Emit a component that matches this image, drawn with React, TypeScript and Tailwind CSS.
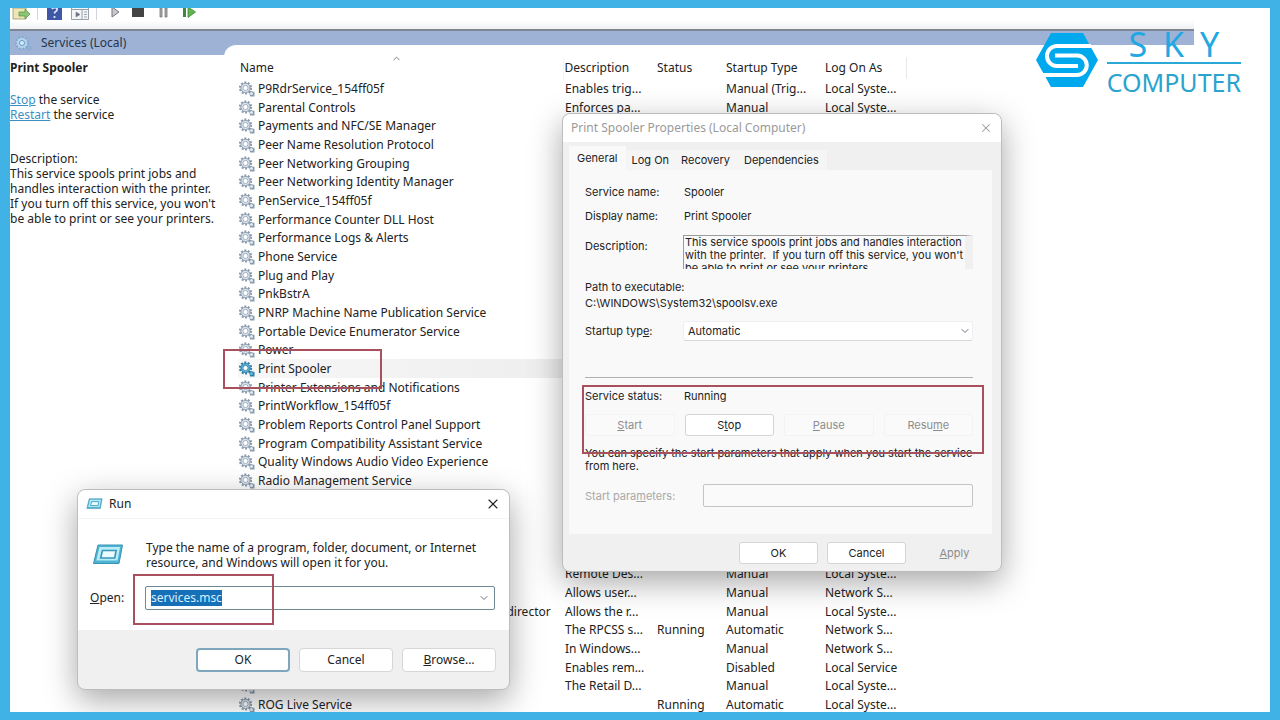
import { ChevronDown, ChevronUp, X } from "lucide-react";
import { useState } from "react";

type Service = {
    name: string
    description?: string
    status?: string
    startup?: string
    logOn?: string
}

const services: Service[] = [
    { name: 'P9RdrService_154ff05f', description: 'Enables trig...', startup: 'Manual (Trig...', logOn: 'Local Syste...' },
    { name: 'Parental Controls', description: 'Enforces pa...', startup: 'Manual', logOn: 'Local Syste...' },
    { name: 'Payments and NFC/SE Manager' },
    { name: 'Peer Name Resolution Protocol' },
    { name: 'Peer Networking Grouping' },
    { name: 'Peer Networking Identity Manager' },
    { name: 'PenService_154ff05f' },
    { name: 'Performance Counter DLL Host' },
    { name: 'Performance Logs & Alerts' },
    { name: 'Phone Service' },
    { name: 'Plug and Play' },
    { name: 'PnkBstrA' },
    { name: 'PNRP Machine Name Publication Service' },
    { name: 'Portable Device Enumerator Service' },
    { name: 'Power' },
    { name: 'Print Spooler' },
    { name: 'Printer Extensions and Notifications' },
    { name: 'PrintWorkflow_154ff05f' },
    { name: 'Problem Reports Control Panel Support' },
    { name: 'Program Compatibility Assistant Service' },
    { name: 'Quality Windows Audio Video Experience' },
    { name: 'Radio Management Service' },
    { name: '' },
    { name: '' },
    { name: '' },
    { name: '' },
    { name: '', description: 'Remote Des...', startup: 'Manual', logOn: 'Local Syste...' },
    { name: '', description: 'Allows user...', startup: 'Manual', logOn: 'Network S...' },
    { name: 'Remote Desktop Services UserMode Port Redirector', description: 'Allows the r...', startup: 'Manual', logOn: 'Local Syste...' },
    { name: '', description: 'The RPCSS s...', status: 'Running', startup: 'Automatic', logOn: 'Network S...' },
    { name: '', description: 'In Windows...', startup: 'Manual', logOn: 'Network S...' },
    { name: '', description: 'Enables rem...', startup: 'Disabled', logOn: 'Local Service' },
    { name: 'Retail Demo Service', description: 'The Retail D...', startup: 'Manual', logOn: 'Local Syste...' },
    { name: 'ROG Live Service', status: 'Running', startup: 'Automatic', logOn: 'Local Syste...' },
]

const spoolerDescription = `This service spools print jobs and handles interaction
with the printer.  If you turn off this service, you won't
be able to print or see your printers.`

function GearIcon({ active }: { active?: boolean }) {
    const line = active ? '#2f7fa8' : '#8b9bad'
    const fill = active ? '#5fb4d6' : '#dde8f1'
    return (
        <svg className="w-[18px] h-4 shrink-0" viewBox="0 0 18 16" fill="none">
            <circle cx="7.5" cy="7" r="5.6" stroke={line} strokeWidth="2" strokeDasharray="2 1.5" />
            <circle cx="7.5" cy="7" r="4.6" fill={fill} stroke={line} strokeWidth="1" />
            <circle cx="7.5" cy="7" r="2.6" fill="#fff" stroke={line} strokeWidth="0.8" />
            <path d="M11 9.500l5.500 1.500v4.500h-4.500z" fill={line} />
            <circle cx="13.5" cy="12.5" r="1.5" fill={fill} />
        </svg>
    )
}

function RunIcon({ className }: { className: string }) {
    return (
        <svg className={className} viewBox="0 0 32 22">
            <path d="M6 1h24.5l-3.5 18.5H1.5z" fill="#4fb3d3" stroke="#3a93b4" strokeWidth="1" />
            <path d="M7.5 3h20.6l-2.6 13.5H4.3z" fill="#b9ecf6" />
            <path d="M10.5 6.5h13.6l-1.4 7.5H8.6z" fill="#e9fbfe" stroke="#3796ba" strokeWidth="1.6" />
        </svg>
    )
}

function Toolbar() {
    return (
        <div className="h-[21px] shrink-0 flex items-start pl-0.5 bg-linear-to-b from-white from-60% to-[#eef0f3]">
            <svg className="w-[19px] h-3" viewBox="0 0 19 12">
                <path d="M1 0h13v11H1z" fill="#ece5b4" stroke="#a9a77c" />
                <path d="M7 4h6V1l5 5-5 5V8H7z" fill="#8cc474" stroke="#5f9a52" strokeWidth="0.8" />
            </svg>
            <div className="w-px h-3 bg-gray-300 ml-1.5"></div>
            <svg className="w-[15px] h-3 ml-[9px]" viewBox="0 0 15 12">
                <path d="M0 0h15v12H0z" fill="#3f57a5" />
                <path d="M5 1c1-2 6-2 5 1-.5 1.500-2.500 1.500-2.500 3.500M7.500 8v2" stroke="#dbe6ff" strokeWidth="1.8" fill="none" />
            </svg>
            <svg className="w-[18px] h-3 ml-[9px]" viewBox="0 0 18 12">
                <path d="M.5 0v11.500h17V0" fill="#f3f5f7" stroke="#98a0aa" />
                <path d="M0 1.500h18M11 1.500v10" stroke="#98a0aa" />
                <path d="M5 4l4 2.500L5 9zM13 4h3M13 6.500h3M13 9h3" fill="#667" stroke="#8a93a0" strokeWidth="0.8" />
            </svg>
            <div className="w-px h-3 bg-gray-300 ml-[7px]"></div>
            <svg className="w-[9px] h-2.5 ml-3.5" viewBox="0 0 9 10">
                <path d="M1-1v10l7-5z" fill="#c9c9cd" stroke="#77777d" />
            </svg>
            <svg className="w-3 h-2.5 ml-3" viewBox="0 0 12 10">
                <path d="M0 0h12v9H0z" fill="#444" />
            </svg>
            <svg className="w-[9px] h-2.5 ml-[15px]" viewBox="0 0 9 10">
                <path d="M1 0h2v9H1zM6 0h2v9H6z" fill="#aaa" stroke="#777" strokeWidth="0.8" />
            </svg>
            <svg className="w-[13px] h-2.5 ml-[15px]" viewBox="0 0 13 10">
                <path d="M0 0h3v9H0z" fill="#3d8a3d" />
                <path d="M5-1v10.500l7.500-5.500z" fill="#62b34c" stroke="#3d8a3d" strokeWidth="0.8" />
            </svg>
        </div>
    )
}

function DetailsPane() {
    return (
        <div className="w-[214px] shrink-0 flex flex-col">
            <div className="h-6 shrink-0 flex items-center gap-[9px] pl-1 text-[#26354e]">
                <svg className="w-[18px] h-4" viewBox="0 0 18 16" fill="none">
                    <circle cx="8" cy="8" r="6" fill="#b8d3ec" stroke="#7fa9cf" strokeWidth="2" strokeDasharray="2 1.400" />
                    <circle cx="8" cy="8" r="2.500" fill="#dcecf9" stroke="#5f9ac6" />
                    <circle cx="15" cy="13" r="2" stroke="#7fa9cf" />
                </svg>
                <span>Services (Local)</span>
            </div>
            <div className="flex-1 bg-white leading-[15px] whitespace-nowrap">
                <h2 className="font-bold mt-[5px]">Print Spooler</h2>
                <div className="mt-[17px]"><a href="#stop" className="text-[#3c8fc4] underline">Stop</a> the service</div>
                <div><a href="#restart" className="text-[#3c8fc4] underline">Restart</a> the service</div>
                <div className="mt-[29px]">Description:</div>
                <p>
                    This service spools print jobs and<br />
                    handles interaction with the printer.<br />
                    If you turn off this service, you won't<br />
                    be able to print or see your printers.
                </p>
            </div>
        </div>
    )
}

function ServiceList() {
    return (
        <div className="relative flex-1 min-w-0 mt-3.5 bg-white rounded-tl-xl overflow-hidden">
            <ChevronUp className="absolute left-[167px] top-2 w-[11px] h-[11px] text-gray-500" strokeWidth={2} />
            <table className="table-fixed w-[668px] ml-3.5 mt-3 text-left whitespace-nowrap">
                <colgroup>
                    <col className="w-[325px]" />
                    <col className="w-[92px]" />
                    <col className="w-[69px]" />
                    <col className="w-[99px]" />
                    <col className="w-[83px]" />
                </colgroup>
                <thead>
                    <tr className="h-[22px]">
                        <th className="font-normal p-0 pl-0.5">Name</th>
                        <th className="font-normal p-0 pl-px border-l border-gray-100">Description</th>
                        <th className="font-normal p-0 pl-0.5">Status</th>
                        <th className="font-normal p-0 pl-0.5">Startup Type</th>
                        <th className="font-normal p-0 pl-0.5 border-r border-gray-200">Log On As</th>
                    </tr>
                </thead>
                <tbody className="leading-[18px]">
                    {services.map((service, i) => {
                        const active = service.name === 'Print Spooler'
                        return (
                            <tr key={i} className="h-[19px] nth-[3n]:h-[18px]">
                                <td className={active ? 'p-0 bg-linear-to-r from-[#f7f7f7] to-[#eeeeee]' : 'p-0'}>
                                    <div className="flex items-center gap-0.5">
                                        <GearIcon active={active} />
                                        <span>{service.name}</span>
                                    </div>
                                </td>
                                <td className="p-0 pl-0.5">{service.description}</td>
                                <td className="p-0 pl-0.5">{service.status}</td>
                                <td className="p-0 pl-0.5">{service.startup}</td>
                                <td className="p-0 pl-0.5">{service.logOn}</td>
                            </tr>
                        )
                    })}
                </tbody>
            </table>
        </div>
    )
}

function PropertiesDialog() {
    const [startup, setStartup] = useState('Automatic')

    const button = 'h-[22px] rounded-[3px] border border-[#d4d4d4] bg-white text-[#222]'
    const disabledButton = 'h-[22px] rounded-[3px] border border-[#f3f3f3] bg-[#fafafa] text-[#8c8c8c]'

    return (
        <section className="absolute left-[552px] top-[105px] w-[440px] rounded-lg border border-[#bdbdbd] bg-[#f0f0f0] shadow-[0_10px_32px_rgba(0,0,0,0.35)] font-['Inter','Liberation_Sans',sans-serif] text-[11px] leading-4 text-[#222]">
            <header className="h-7 flex items-center justify-between pl-2 pr-2 rounded-t-lg bg-white text-[#9a9a9a] font-['Noto_Sans','Open_Sans',sans-serif] text-xs">
                <h2>Print Spooler Properties (Local Computer)</h2>
                <button aria-label="Close"><X className="w-3.5 h-3.5" strokeWidth={1.8} /></button>
            </header>
            <nav className="flex items-end h-7 pl-1.5">
                <button className="h-6 px-2 bg-[#f9f9f9]">General</button>
                <button className="h-5 px-1.5 bg-[#f5f5f5]">Log On</button>
                <button className="h-5 px-1.5 bg-[#f5f5f5]">Recovery</button>
                <button className="h-5 px-2 bg-[#f5f5f5]">Dependencies</button>
            </nav>
            <div className="mx-1.5 mr-[9px] pl-4 pr-[19px] pt-3.5 pb-[27px] bg-[#f9f9f9]">
                <div className="flex"><span className="w-[99px]">Service name:</span><span>Spooler</span></div>
                <div className="flex mt-2"><span className="w-[99px]">Display name:</span><span>Print Spooler</span></div>
                <div className="flex items-start mt-[11px]">
                    <label htmlFor="description" className="w-[98px] pt-[3px] shrink-0">Description:</label>
                    <textarea
                        id="description"
                        readOnly
                        wrap="off"
                        className="block flex-1 min-w-0 h-[34px] resize-none overflow-hidden border-t border-l border-[#9b9b9b] border-r-8 border-r-[#f0f0f0] pl-px leading-[13px] whitespace-pre"
                        defaultValue={spoolerDescription}
                    />
                </div>
                <div className="mt-2.5">Path to executable:</div>
                <div>C:\WINDOWS\System32\spoolsv.exe</div>
                <div className="flex items-center mt-2.5">
                    <label htmlFor="startup" className="w-[98px] shrink-0">Startup typ<u>e</u>:</label>
                    <div className="relative flex-1">
                        <select
                            id="startup"
                            value={startup}
                            onChange={(e) => setStartup(e.target.value)}
                            className="block appearance-none w-full h-5 pl-1 bg-white border border-[#f0f0f0] border-b-[#d8d8d8] rounded-[3px]"
                        >
                            <option>Automatic</option>
                            <option>Manual</option>
                            <option>Disabled</option>
                        </select>
                        <ChevronDown className="absolute right-0.5 top-1 w-3 h-3 text-gray-500 pointer-events-none" strokeWidth={2} />
                    </div>
                </div>
                <hr className="mt-9 border-[#b0b0b0]" />
                <div className="flex mt-2.5"><span className="w-[99px]">Service status:</span><span>Running</span></div>
                <div className="grid grid-cols-4 gap-2.5 mt-2.5">
                    <button disabled className={disabledButton}><u>S</u>tart</button>
                    <button className={button}>S<u>t</u>op</button>
                    <button disabled className={disabledButton}><u>P</u>ause</button>
                    <button disabled className={disabledButton}>Resu<u>m</u>e</button>
                </div>
                <p className="mt-[11px] -mr-4 leading-[13px]">
                    You can specify the start parameters that apply when you start the service<br />
                    from here.
                </p>
                <div className="flex items-center mt-[11px]">
                    <label htmlFor="params" className="w-[118px] shrink-0 text-[#a8a8a8]">Start para<u>m</u>eters:</label>
                    <input id="params" type="text" disabled className="flex-1 min-w-0 h-[23px] border border-[#c4c4c4] rounded-[2px] bg-[#fafafa]" />
                </div>
            </div>
            <footer className="flex justify-end gap-[9px] pt-2 pb-[7px] pr-[7px]">
                <button className={button + ' w-[79px]'}>OK</button>
                <button className={button + ' w-[79px]'}>Cancel</button>
                <button disabled className="w-[79px] h-[22px] text-[#8c8c8c]"><u>A</u>pply</button>
            </footer>
        </section>
    )
}

function RunDialog() {
    const [command, setCommand] = useState('services.msc')

    return (
        <section className="absolute left-[67px] top-[481px] w-[433px] rounded-lg border border-[#bdbdbd] bg-[#f0f0f0] shadow-[0_10px_32px_rgba(0,0,0,0.35)] text-[#222]">
            <header className="h-7 flex items-center pl-2 pr-2 rounded-t-lg bg-white">
                <RunIcon className="w-[17px] h-3" />
                <h2 className="ml-1.5 flex-1">Run</h2>
                <button aria-label="Close"><X className="w-4 h-4" strokeWidth={1.6} /></button>
            </header>
            <div className="pt-[21px] pb-5 pr-3.5 pl-3 bg-white border-t border-gray-100">
                <div className="flex items-center">
                    <RunIcon className="w-8 h-[22px] ml-0.5 mr-[22px] shrink-0" />
                    <p className="leading-[15px] whitespace-nowrap">
                        Type the name of a program, folder, document, or Internet<br />
                        resource, and Windows will open it for you.
                    </p>
                </div>
                <div className="flex items-center mt-4">
                    <label htmlFor="open" className="w-[55px] shrink-0"><u>O</u>pen:</label>
                    <div className="flex-1 h-6 flex items-center justify-between pl-[5px] pr-1 border border-[#6f8a94] rounded-[2px] bg-white">
                        <input
                            id="open"
                            type="text"
                            value={command}
                            onChange={(e) => setCommand(e.target.value)}
                            className="[field-sizing:content] h-4 bg-[#1670b8] text-[#d8efff]"
                        />
                        <ChevronDown className="w-3 h-3 text-gray-500" strokeWidth={2} />
                    </div>
                </div>
            </div>
            <footer className="flex justify-end gap-[9px] pt-[18px] pb-[17px] pr-[13px]">
                <button className="w-[94px] h-6 rounded bg-white border-2 border-[#7ea6bd]">OK</button>
                <button className="w-[94px] h-6 rounded bg-white border border-[#d6d6d6]">Cancel</button>
                <button className="w-[94px] h-6 rounded bg-white border border-[#d6d6d6]"><u>B</u>rowse...</button>
            </footer>
        </section>
    )
}

function Logo() {
    return (
        <div className="absolute right-[29px] top-5 flex items-start gap-2">
            <svg className="w-16 h-[56px] mt-[4px]" viewBox="0 0 64 56">
                <path d="M16 1h32l15 27-15 27H16L1 28z" fill="#00a9ee" />
                <path d="M56 14H22a10 10 0 0 0 0 20h21" fill="none" stroke="#fff" strokeWidth="4" />
                <path d="M20 23.500h22a9.700 9.700 0 0 1 0 19.500H7" fill="none" stroke="#fff" strokeWidth="4" />
            </svg>
            <div className="flex flex-col items-center text-[#2aa3cf] font-['Noto_Sans','Open_Sans',sans-serif]">
                <div className="flex gap-4 text-[34px] leading-8 text-[#1fa8e2]">
                    <span>S</span><span>K</span><span>Y</span>
                </div>
                <div className="w-full h-0.5 mt-0.5 bg-[#2aa9d6]"></div>
                <div className="text-[25px] leading-9">COMPUTER</div>
            </div>
        </div>
    )
}

export default function App() {
    return (
        <div className="h-screen px-2.5 py-2 bg-[#41b2e6] font-['Noto_Sans','Open_Sans',sans-serif] text-xs text-[#222]">
            <main className="relative h-full flex flex-col overflow-hidden bg-white">
                <div className="flex-1 min-h-0 flex flex-col mr-[76px]">
                    <Toolbar />
                    <div className="flex-1 min-h-0 flex border-t-2 border-[#7f8694] bg-[#9db2d5]">
                        <DetailsPane />
                        <ServiceList />
                    </div>
                </div>
                <Logo />
                <RunDialog />
                <PropertiesDialog />
                {/* highlight frames */}
                <div className="absolute left-[213px] top-[341px] w-[159px] h-[40px] border-2 border-[#a8505e]"></div>
                <div className="absolute left-[572px] top-[377px] w-[402px] h-[69px] border-2 border-[#a8505e]"></div>
                <div className="absolute left-[123px] top-[566px] w-[141px] h-[51px] border-2 border-[#a8505e]"></div>
            </main>
        </div>
    )
}
